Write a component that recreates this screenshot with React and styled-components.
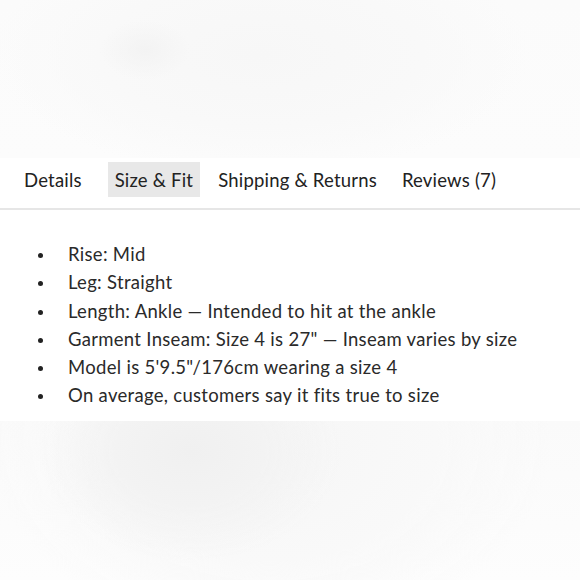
import styled, { createGlobalStyle } from 'styled-components'

const GlobalStyle = createGlobalStyle`
  html, body {
    margin: 0;
    padding: 0;
    background: #ffffff;
  }
  body {
    font-family: "Lato", "Noto Sans", sans-serif;
    color: #222222;
  }
`

const Page = styled.div`
  width: 580px;
  height: 580px;
  display: flex;
  flex-direction: column;
  overflow: hidden;
`

const Hero = styled.div`
  height: 158px;
  flex-shrink: 0;
  background:
    radial-gradient(ellipse 45px 30px at 145px 50px, #f3f3f3 0%, rgba(244,244,244,0) 100%),
    radial-gradient(ellipse 270px 120px at 260px 55px, #f7f7f7 0%, #f9f9f9 60%, rgba(252,252,252,0) 100%),
    linear-gradient(180deg, #fbfbfb 0%, #fcfcfc 100%);
`

const Panel = styled.div`
  background: #ffffff;
  padding-top: 4px;
  padding-bottom: 11px;
`

const Tabs = styled.div`
  display: flex;
  align-items: center;
  gap: 11px;
  padding: 0 0 11px 17px;
  border-bottom: 2px solid #e6e6e6;
`

const Tab = styled.div`
  height: 35px;
  display: flex;
  align-items: center;
  padding: 0 7px;
  font-size: 18.5px;
  letter-spacing: 0.2px;
  color: #222222;
  background: ${p => (p.active ? '#e8e8e8' : 'transparent')};

  &:first-child {
    margin-right: 8px;
  }
`

const List = styled.ul`
  margin: 0;
  padding: 30px 0 0 68px;
  list-style: none;
`

const Item = styled.li`
  position: relative;
  font-size: 18.5px;
  line-height: 28.3px;
  letter-spacing: 0.3px;
  color: #2a2a2a;

  &::before {
    content: '';
    position: absolute;
    left: -30px;
    top: 13px;
    width: 5px;
    height: 5px;
    border-radius: 50%;
    background: #222222;
  }
`

const Bottom = styled.div`
  flex: 1;
  background:
    radial-gradient(ellipse 150px 110px at 190px 30px, #f0f0f0 0%, #f3f3f3 50%, rgba(246,246,246,0) 100%),
    radial-gradient(ellipse 280px 200px at 270px 20px, #f6f6f6 0%, #f9f9f9 60%, rgba(253,253,253,0) 100%),
    linear-gradient(180deg, #fafafa 0%, #fdfdfd 100%);
`

const tabs = ['Details', 'Size & Fit', 'Shipping & Returns', 'Reviews (7)']

const items = [
  'Rise: Mid',
  'Leg: Straight',
  'Length: Ankle — Intended to hit at the ankle',
  'Garment Inseam: Size 4 is 27" — Inseam varies by size',
  'Model is 5\'9.5"/176cm wearing a size 4',
  'On average, customers say it fits true to size',
]

const App = () => {
  return (
    <Page>
      <GlobalStyle />
      <Hero />
      <Panel>
        <Tabs>
          {tabs.map(t => (
            <Tab key={t} active={t === 'Size & Fit'}>{t}</Tab>
          ))}
        </Tabs>
        <List>
          {items.map(i => (
            <Item key={i}>{i}</Item>
          ))}
        </List>
      </Panel>
      <Bottom />
    </Page>
  )
}

export default App
